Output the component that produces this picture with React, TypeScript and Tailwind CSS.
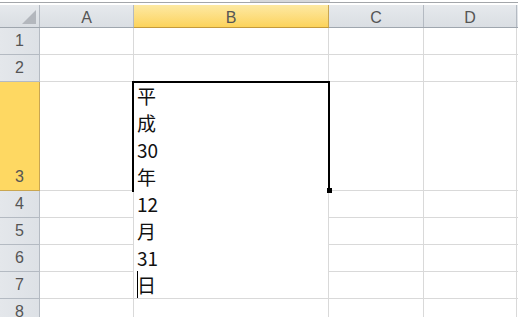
import React from 'react';

const COLS = [
  { key: 'A', w: 'w-[94px]' },
  { key: 'B', w: 'w-[195px]' },
  { key: 'C', w: 'w-[95px]' },
  { key: 'D', w: 'w-[93px]' },
];

const ROWS = [
  { n: 1, h: 'h-[27px]' },
  { n: 2, h: 'h-[27px]' },
  { n: 3, h: 'h-[109px]' },
  { n: 4, h: 'h-[27px]' },
  { n: 5, h: 'h-[27px]' },
  { n: 6, h: 'h-[27px]' },
  { n: 7, h: 'h-[27px]' },
  { n: 8, h: 'h-[27px]' },
];

const LINES = ['平', '成', '30', '年', '12', '月', '31', '日'];

const headFont = { fontFamily: '"Liberation Sans", Arial, sans-serif' };
const cellFont = { fontFamily: '"Noto Sans CJK JP", "Noto Sans", sans-serif' };

export default function App() {
  return (
    <div className="relative w-[518px] h-[317px] overflow-hidden bg-white">
      {/* top strip */}
      <div className="relative h-[5px] bg-white">
        <div className="absolute left-0 right-0 top-[2px] h-px bg-[#a3a6aa]" />
        <div className="absolute left-[250px] w-[80px] top-0 h-[2px] bg-[#d6d8db]" />
      </div>

      {/* column header */}
      <div className="flex h-[23px] border-b border-[#9fa6ae] bg-gradient-to-b from-[#e6e9ed] to-[#dadee3]" style={headFont}>
        <div className="relative w-[40px] shrink-0 border-r border-[#b4bac2]">
          <svg className="absolute right-[3px] bottom-[3px]" width="14" height="14" viewBox="0 0 14 14">
            <polygon points="14,0 14,14 0,14" fill="#b3b7bd" />
          </svg>
        </div>
        {COLS.map((c) => (
          <div
            key={c.key}
            className={`${c.w} shrink-0 flex items-center justify-center pt-[3px] text-[16px] text-[#555] border-r ${
              c.key === 'B'
                ? 'bg-gradient-to-b from-[#fde9a2] to-[#fcd35a] border-[#c9a651] -mb-px border-b border-b-[#c49a3c]'
                : 'border-[#b4bac2]'
            }`}
          >
            {c.key}
          </div>
        ))}
        <div className="flex-1" />
      </div>

      {/* rows */}
      {ROWS.map((r) => (
        <div key={r.n} className={`flex ${r.h} border-b border-[#d9d9d9]`}>
          <div
            className={`w-[40px] shrink-0 flex items-end justify-center pb-[1px] text-[16px] text-[#555] border-r -mb-px border-b ${
              r.n === 3
                ? 'bg-[#fed862] border-[#c9a651]'
                : 'bg-gradient-to-r from-[#e4e7eb] to-[#dde1e6] border-[#b4bac2]'
            }`}
            style={headFont}
          >
            {r.n}
          </div>
          {COLS.map((c) => (
            <div key={c.key} className={`${c.w} shrink-0 border-r border-[#d9d9d9]`} />
          ))}
          <div className="flex-1" />
        </div>
      ))}

      {/* in-cell edit box */}
      <div
        className="absolute left-[134px] top-[82px] w-[194px] h-[216px] bg-white pl-[3px] text-[19px] leading-[27px] text-[#111]"
        style={cellFont}
      >
        {LINES.map((t, i) => (
          <div key={i} className="relative">
            {i === LINES.length - 1 && <span className="absolute left-0 top-0 w-px h-[27px] bg-black" />}
            {t}
          </div>
        ))}
      </div>

      {/* selection border of B3 */}
      <div className="absolute left-[132px] top-[81px] w-[198px] h-[111px] border-2 border-b-0 border-black pointer-events-none" />
      <div className="absolute left-[327px] top-[188px] w-[5px] h-[5px] bg-black" />
    </div>
  );
}
